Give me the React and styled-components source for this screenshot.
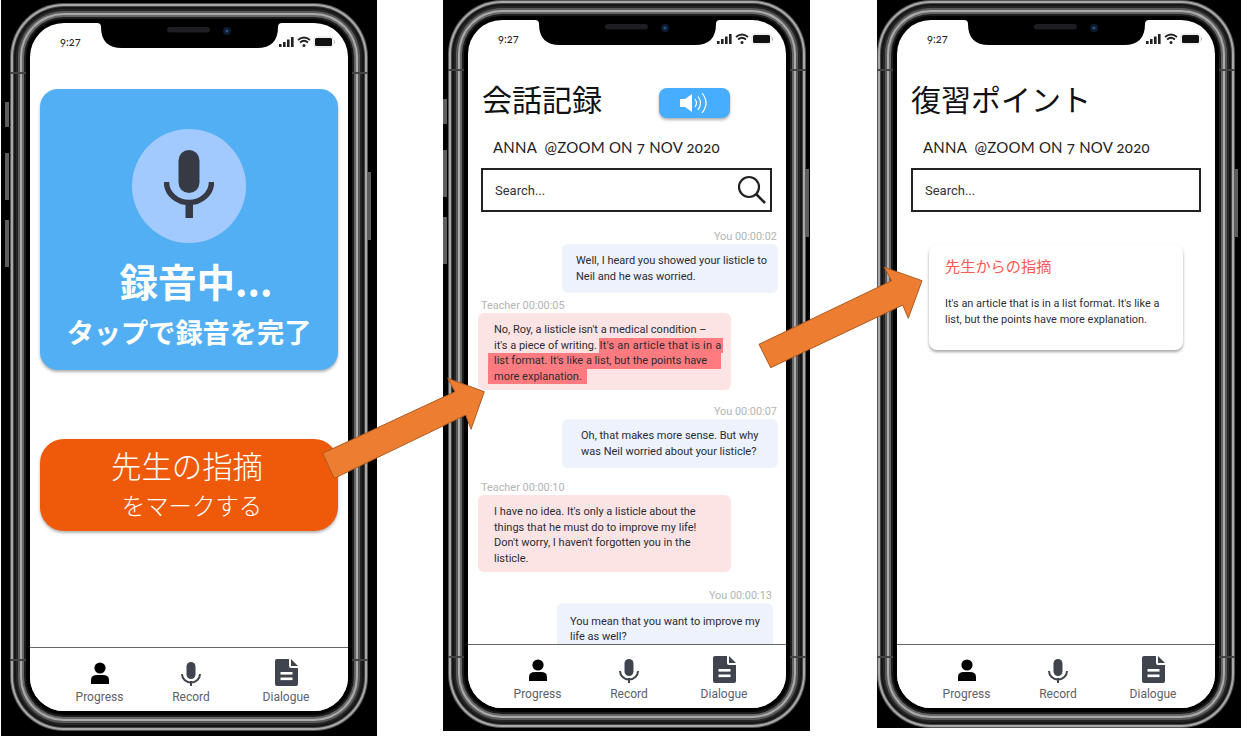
import React from 'react';
import styled, { createGlobalStyle } from 'styled-components';

const Global = createGlobalStyle`
  html, body { margin: 0; padding: 0; background: #fff; }
  body { width: 1244px; height: 736px; overflow: hidden; font-family: Roboto, "Noto Sans CJK JP", sans-serif; }
`;

const Canvas = styled.div`
  position: relative;
  width: 1244px;
  height: 736px;
  overflow: hidden;
  background: #fff;
`;

const PhoneShell = styled.div`
  position: absolute;
  left: ${p => p.$left}px;
  top: 0;
  width: ${p => p.$width}px;
  height: ${p => p.$height}px;
  background: #000;
  overflow: hidden;
  padding: ${p => p.$padTop}px 0 0 ${p => p.$padLeft}px;
  box-sizing: border-box;
`;

const Screen = styled.div`
  position: relative;
  width: 318px;
  height: 688px;
  display: flex;
  flex-direction: column;
  background: #fff;
  border-radius: 34px;
  box-shadow:
    0 0 0 4px #000,
    0 0 0 6px #1c1c1c,
    0 0 0 8px #666,
    0 0 0 10px #aaa,
    0 0 0 12px #5a5a5a,
    0 0 0 14px #262626,
    0 0 0 16px #161616,
    0 0 0 17px #444,
    0 0 0 19px #a8a8a8,
    0 0 0 20px #555;
`;

const ScreenClip = styled.div`
  position: absolute;
  inset: 0;
  display: flex;
  flex-direction: column;
  border-radius: 34px;
  overflow: hidden;
`;

const SideButton = styled.div`
  position: absolute;
  ${p => (p.$right ? 'left: calc(100% + 19px);' : 'left: -25px;')}
  top: ${p => p.$top}px;
  width: 4px;
  height: ${p => p.$h}px;
  background: #5e5e5e;
`;

const Band = styled.div`
  position: absolute;
  top: ${p => p.$top}px;
  ${p => (p.$right ? 'left: calc(100% + 4px);' : 'left: -20px;')}
  width: 16px;
  height: 2px;
  background: #444;
`;

const NotchArt = styled.svg`
  position: absolute;
  left: 67px;
  top: 0;
  display: block;
`;

const StatusBar = styled.div`
  flex: none;
  height: 40px;
  box-sizing: border-box;
  padding-left: 30px;
  display: flex;
  align-items: flex-end;
  position: relative;
`;

const Time = styled.span`
  font: 400 11px/14px Lato, sans-serif;
  font-variant-numeric: oldstyle-nums;
  color: #222;
  margin-bottom: 14px;
`;

const StatusIcons = styled.svg`
  position: absolute;
  left: 248px;
  top: 13px;
  display: block;
`;

const RecordBody = styled.div`
  flex: 1;
  min-height: 0;
  padding: 26px 10px 0;
  display: flex;
  flex-direction: column;
`;

const RecordCard = styled.div`
  height: 281px;
  box-sizing: border-box;
  padding-top: 40px;
  background: #53aff3;
  border-radius: 18px;
  box-shadow: 0 2px 3px rgba(0,0,0,.3);
  display: flex;
  flex-direction: column;
  align-items: center;
  color: #fff;
`;

const MicCircle = styled.div`
  width: 114px;
  height: 114px;
  border-radius: 50%;
  background: #a2caff;
  display: flex;
  align-items: center;
  justify-content: center;
`;

const RecTitle = styled.div`
  font: 700 38.5px/46px "Noto Sans CJK JP", sans-serif;
  margin-top: 14px;
  padding-left: 14px;
`;

const RecSub = styled.div`
  font: 700 27.2px/36px "Noto Sans CJK JP", sans-serif;
  margin-top: 10px;
  white-space: nowrap;
`;

const MarkButton = styled.div`
  margin-top: 69px;
  height: 92px;
  background: #ee5a0a;
  border-radius: 24px;
  box-shadow: 0 2px 3px rgba(0,0,0,.3);
  color: #fff;
  display: flex;
  flex-direction: column;
  align-items: center;
  font-family: "Noto Sans CJK JP", sans-serif;
`;

const MarkTitle = styled.div`
  font-size: 30.4px;
  font-weight: 300;
  line-height: 40px;
  margin-top: 6px;
  margin-left: -4px;
`;

const MarkSub = styled.div`
  font-size: 23.4px;
  font-weight: 300;
  line-height: 30px;
  margin-top: 5px;
  margin-left: 6px;
`;

const HeaderRow = styled.div`
  flex: none;
  height: 40px;
  margin-top: 18px;
  margin-bottom: 2px;
  padding-left: ${p => p.$pad}px;
  display: flex;
  align-items: center;
`;

const Title = styled.h1`
  margin: 0;
  font: 400 30px/40px "Noto Sans CJK JP", sans-serif;
  color: #111;
  white-space: nowrap;
`;

const SoundButton = styled.div`
  margin: 10px 0 0 57px;
  width: 71px;
  height: 30px;
  background: #47aeff;
  border-radius: 8px;
  box-shadow: 0 2px 3px rgba(0,0,0,.3);
  display: flex;
  align-items: center;
  justify-content: center;
`;

const Subtitle = styled.div`
  flex: none;
  margin-top: 15px;
  padding-left: ${p => p.$pad}px;
  font: 400 15px/24px Lato, sans-serif;
  font-variant-numeric: oldstyle-nums;
  letter-spacing: .2px;
  color: #222;
  white-space: pre;
`;

const SearchBox = styled.div`
  flex: none;
  margin: 9px 0 0 ${p => p.$left}px;
  width: ${p => p.$width}px;
  height: 44px;
  box-sizing: border-box;
  border: 2px solid #222;
  padding: 0 3px 0 12px;
  display: flex;
  align-items: center;
  justify-content: space-between;
  font-size: 13px;
  color: #333;
`;

const Chat = styled.div`
  flex: 1;
  min-height: 0;
  overflow: hidden;
  display: flex;
  flex-direction: column;
  padding-top: 17px;
`;

const Group = styled.div`
  flex: none;
  margin-top: ${p => p.$gap}px;
  margin-left: ${p => p.$left}px;
  width: ${p => p.$width}px;
`;

const Stamp = styled.div`
  font-size: 10.9px;
  line-height: 15px;
  color: #b4b4b4;
  text-align: ${p => (p.$me ? 'right' : 'left')};
  padding: ${p => (p.$me ? '0 1px 0 0' : '0 0 0 3px')};
`;

const Bubble = styled.div`
  box-sizing: border-box;
  height: ${p => p.$h}px;
  padding: ${p => p.$top || 9}px 0 0 ${p => p.$pad}px;
  background: ${p => (p.$me ? '#edf2fd' : '#fde4e4')};
  border-radius: 6px;
  font-size: 11px;
  line-height: 15.6px;
  color: #2a2c34;
  white-space: nowrap;
`;

const Highlight = styled.span`
  display: inline-block;
  vertical-align: top;
  background: #ff7b7f;
  margin-left: ${p => -p.$l}px;
  padding: 0 ${p => p.$r}px 0 ${p => p.$l}px;
  letter-spacing: ${p => p.$spread || 0}px;
`;

const NoteCard = styled.div`
  flex: none;
  margin: 33px 0 0 32px;
  width: 254px;
  height: 105px;
  box-sizing: border-box;
  padding: 10px 16px;
  background: #fff;
  border-radius: 8px;
  box-shadow: 0 2px 3px rgba(0,0,0,.35);
`;

const NoteTitle = styled.div`
  font: 400 15.2px/20px "Noto Sans CJK JP", sans-serif;
  color: #ff5a4f;
`;

const NoteText = styled.div`
  margin-top: 21px;
  font-size: 10.95px;
  line-height: 15.8px;
  color: #2c2f38;
  white-space: nowrap;
`;

const Spacer = styled.div`
  flex: 1;
  min-height: 0;
`;

const TabBar = styled.div`
  flex: none;
  height: 64px;
  box-sizing: border-box;
  border-top: 1px solid #666;
  background: #fff;
  display: grid;
  grid-template-columns: 139px 44px 146px;
  position: relative;
  z-index: 1;
`;

const Tab = styled.div`
  display: flex;
  flex-direction: column;
  align-items: center;
  justify-content: flex-end;
  height: 57px;
  font-size: 12px;
  line-height: 15px;
  color: #5d616b;
  white-space: nowrap;
`;

const TabIcon = styled.svg`
  display: block;
  margin-bottom: ${p => p.$gap}px;
`;

const ArrowArt = styled.svg`
  position: absolute;
  left: 0;
  top: 0;
  pointer-events: none;
`;

const Notch = () => (
  <NotchArt width="185" height="26" viewBox="0 0 185 26">
    <path d="M0 0 H185 Q181 0 181 4 Q181 25 160 25 H25 Q4 25 4 4 Q4 0 0 0 Z" fill="#000" />
    <rect x="70" y="4" width="43" height="5.5" rx="2.75" fill="#1d1d22" />
    <circle cx="130" cy="8" r="4" fill="#0d1a30" />
    <circle cx="130" cy="8" r="1.6" fill="#24507e" />
  </NotchArt>
);

const Status = () => (
  <StatusIcons width="60" height="12" viewBox="0 0 60 12">
    <rect x="1" y="8" width="2.6" height="3" fill="#222" />
    <rect x="5" y="6" width="2.6" height="5" fill="#222" />
    <rect x="9" y="3.5" width="2.6" height="7.5" fill="#222" />
    <rect x="13" y="1" width="2.6" height="10" fill="#222" />
    <path d="M20 4 Q26 -1 32 4 M22 6.5 Q26 3 30 6.5" fill="none" stroke="#222" strokeWidth="1.7" />
    <circle cx="26" cy="9.5" r="1.5" fill="#222" />
    <rect x="37" y="2" width="17" height="8" rx="1.5" fill="#111" />
    <rect x="36" y="1" width="19" height="10" rx="2" fill="none" stroke="#ccc" strokeWidth=".6" />
    <rect x="56" y="4.5" width="1" height="3" fill="#bbb" />
  </StatusIcons>
);

const MicLarge = () => (
  <svg width="50" height="68" viewBox="0 0 50 68" style={{ display: 'block', marginTop: -4 }}>
    <rect x="14.5" y="0" width="21" height="43" rx="10.5" fill="#363a45" />
    <path d="M2.5 32 A22.5 20.5 0 0 0 47.5 32" fill="none" stroke="#363a45" strokeWidth="5.5" />
    <rect x="21.5" y="50" width="7.5" height="18" fill="#363a45" />
  </svg>
);

const Speaker = () => (
  <svg width="30" height="22" viewBox="0 0 30 22">
    <path d="M0 7 H5 L12 2 V20 L5 15 H0 Z" fill="#fff" />
    <path d="M15 7 Q18 11 15 15 M18 4.5 Q23 11 18 18 M22 1 Q30 11 22 21" fill="none" stroke="#fff" strokeWidth="1.2" />
  </svg>
);

const Magnifier = () => (
  <svg width="30" height="30" viewBox="0 0 30 30">
    <circle cx="12" cy="12" r="10" fill="none" stroke="#222" strokeWidth="2.2" />
    <path d="M19 19 L28 28" stroke="#222" strokeWidth="2.6" />
  </svg>
);

const Tabs = () => (
  <TabBar>
    <Tab>
      <TabIcon $gap={6} width="20" height="22" viewBox="0 0 20 22">
        <circle cx="10" cy="6" r="5.6" fill="#000" />
        <path d="M1 22 V18 Q1 13 7 13 H13 Q19 13 19 18 V22 Z" fill="#000" />
      </TabIcon>
      Progress
    </Tab>
    <Tab>
      <TabIcon $gap={4} width="20" height="24" viewBox="0 0 20 24">
        <rect x="5.5" y="0" width="9" height="17" rx="4.5" fill="#3f444f" />
        <path d="M1 12 A9 8.5 0 0 0 19 12" fill="none" stroke="#3f444f" strokeWidth="2" />
        <rect x="9" y="19" width="2" height="5" fill="#3f444f" />
      </TabIcon>
      Record
    </Tab>
    <Tab>
      <TabIcon $gap={4} width="23" height="27" viewBox="0 0 23 27">
        <path d="M2 0 H14 V7 Q14 9 16 9 H23 V25 Q23 27 21 27 H2 Q0 27 0 25 V2 Q0 0 2 0 Z" fill="#3f444f" />
        <path d="M16 0 L23 7 H16 Z" fill="#3f444f" />
        <rect x="5.5" y="13" width="12" height="2.6" fill="#fff" />
        <rect x="5.5" y="18.5" width="12" height="2.6" fill="#fff" />
      </TabIcon>
      Dialogue
    </Tab>
  </TabBar>
);

const Phone = ({ left, width, height, padTop, padLeft, children }) => (
  <PhoneShell $left={left} $width={width} $height={height} $padTop={padTop} $padLeft={padLeft}>
    <Screen>
      <SideButton $top={79} $h={25} />
      <SideButton $top={130} $h={47} />
      <SideButton $top={197} $h={47} />
      <SideButton $right $top={149} $h={68} />
      <Band $top={49} />
      <Band $right $top={49} />
      <Band $top={636} />
      <Band $right $top={636} />
      <ScreenClip>
        <StatusBar>
          <Time>9:27</Time>
          <Status />
        </StatusBar>
        {children}
        <Tabs />
      </ScreenClip>
      <Notch />
    </Screen>
  </PhoneShell>
);

const Arrow = ({ points }) => (
  <ArrowArt width="1244" height="736" viewBox="0 0 1244 736">
    <polygon points={points} fill="#ed7d31" stroke="#ae5a21" strokeWidth="1" />
  </ArrowArt>
);

export default function App() {
  return (
    <Canvas>
      <Global />
      <Phone left={1} width={376} height={736} padTop={23} padLeft={29}>
        <RecordBody>
          <RecordCard>
            <MicCircle><MicLarge /></MicCircle>
            <RecTitle>録音中...</RecTitle>
            <RecSub>タップで録音を完了</RecSub>
          </RecordCard>
          <MarkButton>
            <MarkTitle>先生の指摘</MarkTitle>
            <MarkSub>をマークする</MarkSub>
          </MarkButton>
        </RecordBody>
      </Phone>

      <Phone left={443} width={367} height={731} padTop={20} padLeft={25}>
        <HeaderRow $pad={14}>
          <Title>会話記録</Title>
          <SoundButton><Speaker /></SoundButton>
        </HeaderRow>
        <Subtitle $pad={25}>{'ANNA  @ZOOM ON 7 NOV 2020'}</Subtitle>
        <SearchBox $left={13} $width={291}>
          Search...
          <Magnifier />
        </SearchBox>
        <Chat>
          <Group $gap={0} $left={94} $width={216}>
            <Stamp $me>You 00:00:02</Stamp>
            <Bubble $me $h={49} $pad={14}>Well, I heard you showed your listicle to<br />Neil and he was worried.</Bubble>
          </Group>
          <Group $gap={5} $left={10} $width={253}>
            <Stamp>Teacher 00:00:05</Stamp>
            <Bubble $h={77} $pad={16}>
              No, Roy, a listicle isn't a medical condition –<br />
              it's a piece of writing. <Highlight $l={1} $r={1} $spread={0.25}>It's an article that is in a</Highlight><br />
              <Highlight $l={6} $r={14}>list format. It's like a list, but the points have</Highlight><br />
              <Highlight $l={6} $r={5}>more explanation.</Highlight>
            </Bubble>
          </Group>
          <Group $gap={14} $left={94} $width={216}>
            <Stamp $me>You 00:00:07</Stamp>
            <Bubble $me $h={49} $pad={19}>Oh, that makes more sense. But why<br />was Neil worried about your listicle?</Bubble>
          </Group>
          <Group $gap={12} $left={10} $width={253}>
            <Stamp>Teacher 00:00:10</Stamp>
            <Bubble $h={77} $pad={16}>
              I have no idea. It's only a listicle about the<br />
              things that he must do to improve my life!<br />
              Don't worry, I haven't forgotten you in the<br />
              listicle.
            </Bubble>
          </Group>
          <Group $gap={16} $left={89} $width={216}>
            <Stamp $me>You 00:00:13</Stamp>
            <Bubble $me $h={49} $top={10.5} $pad={13}>You mean that you want to improve my<br />life as well?</Bubble>
          </Group>
        </Chat>
      </Phone>

      <Phone left={877} width={364} height={728} padTop={20} padLeft={20}>
        <HeaderRow $pad={14}>
          <Title>復習ポイント</Title>
        </HeaderRow>
        <Subtitle $pad={26}>{'ANNA  @ZOOM ON 7 NOV 2020'}</Subtitle>
        <SearchBox $left={14} $width={290}>Search...</SearchBox>
        <NoteCard>
          <NoteTitle>先生からの指摘</NoteTitle>
          <NoteText>It's an article that is in a list format. It's like a<br />list, but the points have more explanation.</NoteText>
        </NoteCard>
        <Spacer />
      </Phone>

      <Arrow points="322.7,453.3 455,391.7 447.7,378.3 484.3,391.7 471,429.3 465.7,415 334.3,478.3" />
      <Arrow points="759,344.3 891.7,280.7 884.3,267.3 922,280.7 908.3,318.3 902.7,305 770.7,367.7" />
    </Canvas>
  );
}
